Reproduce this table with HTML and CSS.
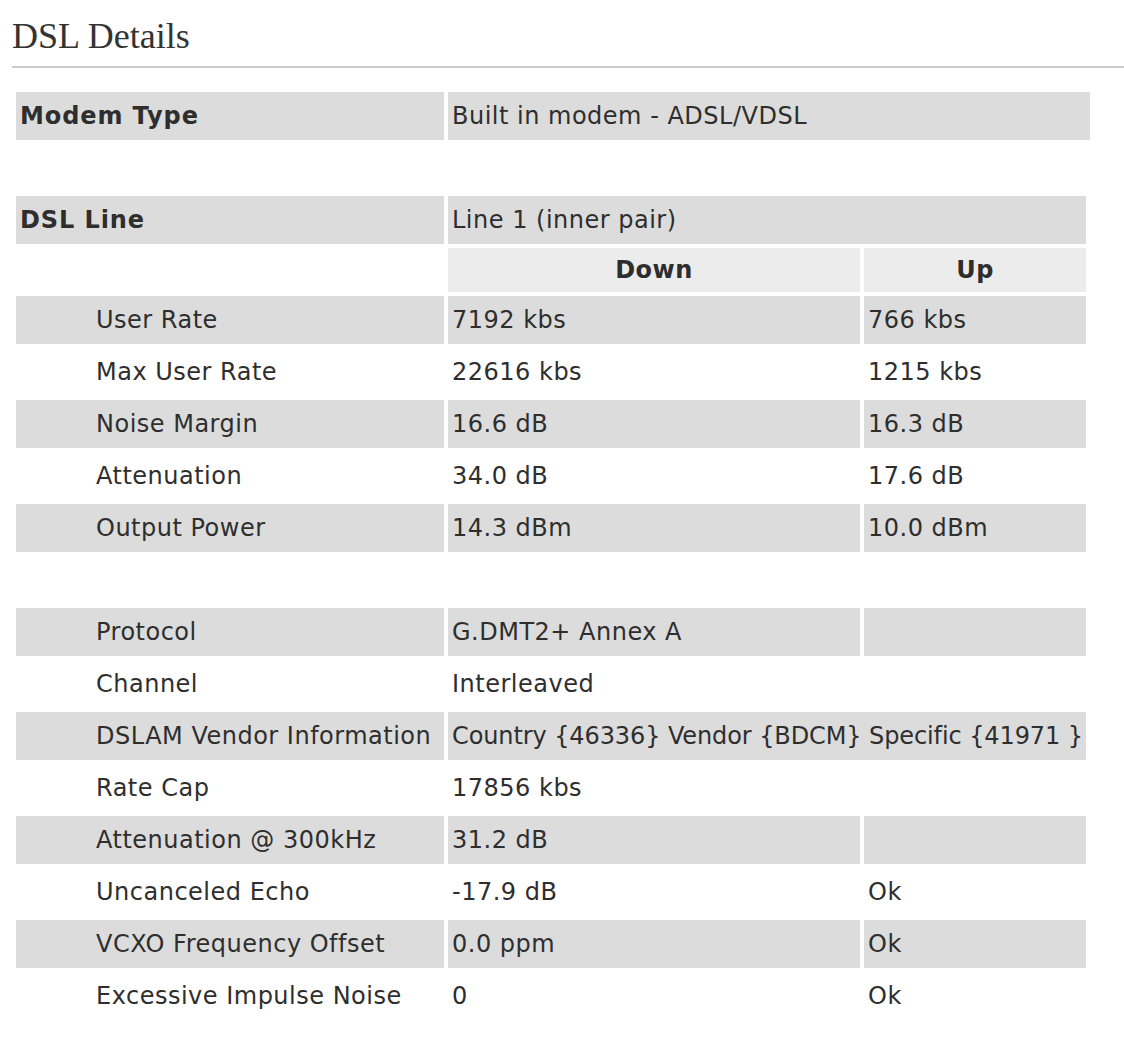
FILE: index.html
```html
<!DOCTYPE html>
<html>
<head>
<meta charset="utf-8">
<title>DSL Details</title>
<link rel="stylesheet" href="styles.css">
</head>
<body>
<div class="page">
  <h1 class="title">DSL Details</h1>
  <div class="rule"></div>

  <table class="grid grid-two">
    <colgroup><col class="c-label"><col class="c-wide"></colgroup>
    <tr class="shade">
      <td class="strong">Modem Type</td>
      <td>Built in modem - ADSL/VDSL</td>
    </tr>
  </table>

  <table class="grid grid-three gap">
    <colgroup><col class="c-label"><col class="c-down"><col class="c-up"></colgroup>
    <tr class="shade">
      <td class="strong">DSL Line</td>
      <td colspan="2">Line 1 (inner pair)</td>
    </tr>
    <tr class="head">
      <td class="blank"></td>
      <th>Down</th>
      <th>Up</th>
    </tr>
    <tr class="shade"><td class="sub">User Rate</td><td>7192 kbs</td><td>766 kbs</td></tr>
    <tr><td class="sub">Max User Rate</td><td>22616 kbs</td><td>1215 kbs</td></tr>
    <tr class="shade"><td class="sub">Noise Margin</td><td>16.6 dB</td><td>16.3 dB</td></tr>
    <tr><td class="sub">Attenuation</td><td>34.0 dB</td><td>17.6 dB</td></tr>
    <tr class="shade"><td class="sub">Output Power</td><td>14.3 dBm</td><td>10.0 dBm</td></tr>
  </table>

  <table class="grid grid-three gap">
    <colgroup><col class="c-label"><col class="c-down"><col class="c-up"></colgroup>
    <tr class="shade"><td class="sub">Protocol</td><td>G.DMT2+ Annex A</td><td></td></tr>
    <tr><td class="sub">Channel</td><td colspan="2">Interleaved</td></tr>
    <tr class="shade"><td class="sub">DSLAM Vendor Information</td><td colspan="2" class="tight">Country {46336} Vendor {BDCM} Specific {41971 }</td></tr>
    <tr><td class="sub">Rate Cap</td><td colspan="2">17856 kbs</td></tr>
    <tr class="shade"><td class="sub">Attenuation @ 300kHz</td><td>31.2 dB</td><td></td></tr>
    <tr><td class="sub">Uncanceled Echo</td><td>-17.9 dB</td><td>Ok</td></tr>
    <tr class="shade"><td class="sub">VCXO Frequency Offset</td><td>0.0 ppm</td><td>Ok</td></tr>
    <tr><td class="sub">Excessive Impulse Noise</td><td>0</td><td>Ok</td></tr>
  </table>
</div>
</body>
</html>
```
FILE: styles.css
```css
html, body {
  margin: 0;
  padding: 0;
  background: #ffffff;
}

.page {
  padding: 0 0 22px 12px;
  color: #2e2e2e;
  font-family: "DejaVu Sans", Verdana, sans-serif;
  font-size: 24px;
}

.title {
  margin: 16px 0 0 0;
  font-family: "Liberation Serif", "Times New Roman", serif;
  font-weight: normal;
  font-size: 36px;
  line-height: 40px;
  color: #333333;
}

.rule {
  margin-top: 10px;
  height: 0;
  border-top: 2px solid #cccccc;
}

.grid {
  margin-top: 20px;
  border-collapse: separate;
  border-spacing: 4px;
  table-layout: fixed;
}

.grid.gap {
  margin-top: 48px;
}

.grid-two {
  width: 1082px;
}

.grid-three {
  width: 1078px;
}

.c-label { width: 428px; }
.c-wide { width: 642px; }
.c-down { width: 412px; }
.c-up { width: 222px; }

.grid td,
.grid th {
  height: 48px;
  padding: 0 4px;
  box-sizing: border-box;
  vertical-align: middle;
  text-align: left;
  white-space: nowrap;
  font-weight: normal;
  letter-spacing: 0.5px;
}

.grid tr.shade td {
  background: #dcdcdc;
}

.grid tr.head th {
  height: 44px;
  background: #ececec;
  text-align: center;
  font-weight: bold;
}

.grid tr.head td.blank {
  height: 44px;
  background: transparent;
}

.grid td.strong {
  font-weight: bold;
  letter-spacing: 0.9px;
}

.grid td.sub {
  padding-left: 80px;
}

.grid td.tight {
  letter-spacing: -0.1px;
}
```
